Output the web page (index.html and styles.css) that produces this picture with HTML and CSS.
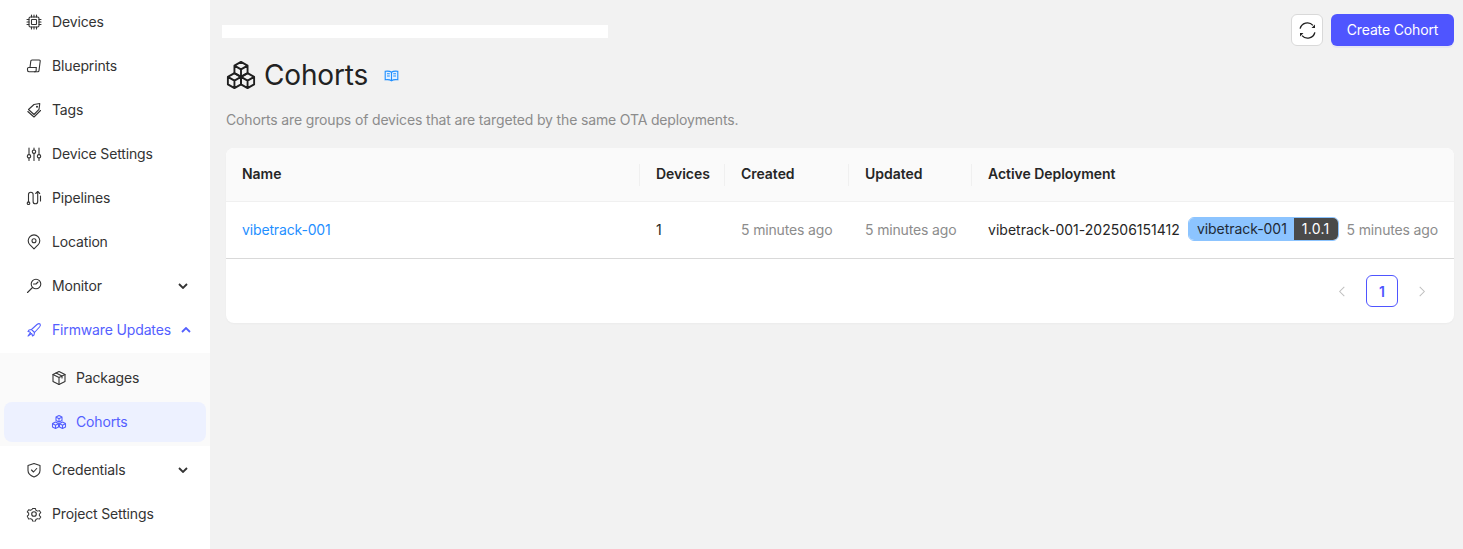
FILE: index.html
```html
<!DOCTYPE html>
<html lang="en">
<head>
<meta charset="utf-8">
<title>Cohorts</title>
<link rel="stylesheet" href="styles.css">
</head>
<body>
<div class="app">
  <nav class="sidebar">
    <a class="nav-item"><svg class="ico" viewBox="0 0 16 16"><rect x="3" y="3" width="10" height="10" rx="1.500"/><rect x="5.500" y="5.500" width="5" height="5" rx=".6"/><path d="M5.500 1v2M8 1v2M10.500 1v2M5.500 13v2M8 13v2M10.500 13v2M1 5.500h2M1 8h2M1 10.500h2M13 5.500h2M13 8h2M13 10.500h2"/></svg><span>Devices</span></a>
    <a class="nav-item"><svg class="ico" viewBox="0 0 16 16"><path d="M4 9.500 4.800 3A1.300 1.300 0 0 1 6 2h7.200a1 1 0 0 1 1 1.200L13 12.500a1.300 1.300 0 0 1-1.300 1.300H3A1.700 1.700 0 0 1 1.500 12v-1.300a1.200 1.200 0 0 1 1.200-1.200h7.500"/><path d="M10.200 9.500v2.500a1.700 1.700 0 0 1-1.700 1.800"/></svg><span>Blueprints</span></a>
    <a class="nav-item"><svg class="ico" viewBox="0 0 16 16"><path d="M2.500 7.500 8 2.500l5.800-1 -.8 5.800L8 12.500z"/><path d="M1.800 9.500 8 15l6.500-6.500"/><circle cx="11" cy="4.800" r=".5"/></svg><span>Tags</span></a>
    <a class="nav-item"><svg class="ico" viewBox="0 0 16 16"><path d="M3 2v6.500M3 12v2.500M8 2v2M8 7.500v7M13 2v6.500M13 12v2.500"/><circle cx="3" cy="10.300" r="1.700"/><circle cx="8" cy="5.700" r="1.700"/><circle cx="13" cy="10.300" r="1.700"/></svg><span>Device Settings</span></a>
    <a class="nav-item"><svg class="ico" viewBox="0 0 16 16"><circle cx="2.500" cy="13.200" r="1.300"/><path d="M2.500 12V4.500a2.300 2.300 0 0 1 4.600 0v7a2.300 2.300 0 0 0 4.600 0v-10"/><path d="M9.700 3.500l2-2 2 2"/><path d="M14.500 6v5"/></svg><span>Pipelines</span></a>
    <a class="nav-item"><svg class="ico" viewBox="0 0 16 16"><path d="M8 14.800 3.800 10.700a5.800 5.800 0 1 1 8.400 0z"/><circle cx="8" cy="6.800" r="2"/></svg><span>Location</span></a>
    <a class="nav-item"><svg class="ico" viewBox="0 0 16 16"><circle cx="10" cy="6" r="4.800"/><path d="M6.500 9.500 1.500 14.500M7.500 6h2.500l2-2"/></svg><span>Monitor</span><svg class="chev" viewBox="0 0 10 6"><path d="M1 1l4 4 4-4"/></svg></a>
    <a class="nav-item is-open"><svg class="ico" viewBox="0 0 16 16"><path d="M5.500 7.500 11 2.500c1-.8 2.500-1 3-.5s.3 2-.5 3L8.500 10.500z"/><path d="M5.500 7.500 3 8l-1 1.500 2 .5M8.500 10.500 8 13l-1.500 1-.5-2M4.500 10.500 2 14l3.500-2.500"/></svg><span>Firmware Updates</span><svg class="chev" viewBox="0 0 10 6"><path d="M1 5l4-4 4 4"/></svg></a>
    <div class="submenu">
      <a class="sub-item"><svg class="ico" viewBox="0 0 16 16"><path d="M8 1.500 14 4.500v7l-6 3-6-3v-7z"/><path d="M2 4.500 8 7.500l6-3M8 7.500v7M5 3l6 3v2"/></svg><span>Packages</span></a>
      <a class="sub-item is-active"><svg class="ico" viewBox="0 0 16 16"><path d="M8 1.500l3 1.600v3.300L8 8 5 6.400V3.100zM5 3.100 8 4.800l3-1.700M8 4.800V8"/><path d="M4.500 8 7.500 9.600v3.300l-3 1.600-3-1.600V9.600zM1.500 9.600l3 1.700 3-1.700M4.500 11.300v3.200"/><path d="M11.500 8l3 1.600v3.300l-3 1.600-3-1.600V9.600zM8.500 9.600l3 1.700 3-1.700M11.500 11.300v3.200"/></svg><span>Cohorts</span></a>
    </div>
    <a class="nav-item"><svg class="ico" viewBox="0 0 16 16"><path d="M8 1.500 14 3.500v5c0 3-2.500 5.200-6 6.500-3.500-1.300-6-3.500-6-6.500v-5z"/><path d="M5.500 8l2 2 3.200-3.500"/></svg><span>Credentials</span><svg class="chev" viewBox="0 0 10 6"><path d="M1 1l4 4 4-4"/></svg></a>
    <a class="nav-item"><svg class="ico" viewBox="0 0 16 16"><path d="M6.500 1.500h3l.5 2 1.700 1 2-.6 1.500 2.600-1.500 1.500v2l1.500 1.500-1.500 2.600-2-.6-1.700 1-.5 2h-3l-.5-2-1.700-1-2 .6L.8 10.500 2.300 9V7L.8 5.500l1.500-2.600 2 .6 1.700-1z" transform="matrix(.94 0 0 .84 .5 1.300)"/><circle cx="8" cy="8" r="2.300"/></svg><span>Project Settings</span></a>
  </nav>

  <main class="main">
    <header class="topbar">
      <div class="breadcrumb"></div>
      <div class="actions">
        <button class="btn-icon" type="button"><svg viewBox="0 0 16 16"><path d="M1.800 6.500A6.300 6.300 0 0 1 12.600 3.700"/><path d="M14.200 9.500A6.300 6.300 0 0 1 3.400 12.300"/><path class="arrowhead" d="M14.300 3v2.900h-2.900zM1.700 13v-2.900h2.900z"/></svg></button>
        <button class="btn-primary" type="button">Create Cohort</button>
      </div>
    </header>

    <div class="title-row">
      <svg class="title-ico" viewBox="0 0 32 32"><path d="M16 2l7 4v8l-7 4-7-4V6zM9 6l7 4 7-4M16 10v8"/><path d="M9 14l7 4v8l-7 4-7-4v-8zM2 18l7 4 7-4M9 22v8"/><path d="M23 14l7 4v8l-7 4-7-4v-8zM16 18l7 4 7-4M23 22v8"/></svg>
      <h1>Cohorts</h1>
      <svg class="doc-ico" viewBox="0 0 14 12"><path d="M7 2.200C5.500 1 3 1 .7 1.300v8.500C3 9.500 5.500 9.600 7 10.800c1.500-1.200 4-1.300 6.300-1V1.300C11 1 8.500 1 7 2.200zM7 2.200v8.600M2.500 3.800h2.800M2.500 6h2.800M8.700 3.800h2.800M8.700 6h2.800"/></svg>
    </div>
    <p class="desc">Cohorts are groups of devices that are targeted by the same OTA deployments.</p>

    <section class="card">
      <table class="table">
        <colgroup><col class="c-name"><col class="c-dev"><col class="c-created"><col class="c-updated"><col></colgroup>
        <thead>
          <tr><th>Name</th><th>Devices</th><th>Created</th><th>Updated</th><th>Active Deployment</th></tr>
        </thead>
        <tbody>
          <tr>
            <td><a class="link">vibetrack-001</a></td>
            <td>1</td>
            <td class="muted">5 minutes ago</td>
            <td class="muted">5 minutes ago</td>
            <td>
              <div class="deploy">
                <span class="digits">vibetrack-001-202506151412</span>
                <span class="tag"><span class="tag-name">vibetrack-001</span><span class="tag-ver">1.0.1</span></span>
                <span class="muted">5 minutes ago</span>
              </div>
            </td>
          </tr>
        </tbody>
      </table>
      <div class="pager">
        <svg class="pg-arrow" viewBox="0 0 8 12"><path d="M6.500 1 1.500 6l5 5"/></svg>
        <span class="pg-num">1</span>
        <svg class="pg-arrow" viewBox="0 0 8 12"><path d="M1.500 1l5 5-5 5"/></svg>
      </div>
    </section>
  </main>
</div>
</body>
</html>
```

FILE: styles.css
```css
* { box-sizing: border-box; }
html, body { margin: 0; height: 100%; }
body {
  font-family: Inter, "Liberation Sans", sans-serif;
  font-size: 14px;
  letter-spacing: -0.15px;
  color: #262626;
  background: #f2f2f2;
  overflow: hidden;
}
.app { display: flex; height: 549px; }

.sidebar {
  width: 210px;
  flex: none;
  background: #fff;
  color: #333;
}
.nav-item {
  display: flex;
  align-items: center;
  height: 44px;
  padding: 0 22px 0 26px;
  gap: 10px;
  white-space: nowrap;
}
.nav-item span { flex: 1; padding-bottom: 2px; }
.ico {
  width: 16px;
  height: 16px;
  flex: none;
  fill: none;
  stroke: currentColor;
  stroke-width: 1.100;
  stroke-linejoin: round;
  stroke-linecap: round;
}
.chev {
  width: 10px;
  height: 6px;
  flex: none;
  fill: none;
  stroke: currentColor;
  stroke-width: 1.800;
}
.is-open { color: #5460ff; }
.submenu {
  background: #fafafa;
  margin: 1px 0 2px;
  padding: 5px 4px 4px;
}
.sub-item {
  display: flex;
  align-items: center;
  height: 40px;
  padding-left: 47px;
  gap: 9px;
  border-radius: 8px;
  margin-bottom: 4px;
}
.sub-item span { padding-bottom: 2px; }
.sub-item:last-child { margin-bottom: 0; }
.is-active { background: #edf1ff; color: #5460ff; }

.main { flex: 1; min-width: 0; padding: 14px 9px 0 16px; }
.topbar { display: flex; align-items: flex-start; justify-content: space-between; height: 32px; }
.breadcrumb { width: 386px; height: 13px; background: #fff; margin: 11px 0 0 -4px; }
.actions { display: flex; gap: 8px; }
.btn-icon {
  width: 32px;
  height: 32px;
  padding: 0;
  display: flex;
  align-items: center;
  justify-content: center;
  background: #fff;
  border: 1px solid #d9d9d9;
  border-radius: 6px;
}
.btn-icon svg {
  width: 19px;
  height: 19px;
  flex: none;
  fill: none;
  stroke: #1f1f1f;
  stroke-width: 1.150;
}
.arrowhead { fill: #1f1f1f; stroke: none; }
.btn-primary {
  width: 123px;
  height: 32px;
  padding: 0 0 2px;
  background: #4f55ff;
  color: #fff;
  border: 0;
  border-radius: 6px;
  font: inherit;
  letter-spacing: inherit;
  box-shadow: 0 2px 0 rgba(79, 85, 255, .08);
}
.title-row { display: flex; align-items: center; height: 42px; margin-top: 8px; }
.title-ico {
  width: 30px;
  height: 30px;
  flex: none;
  fill: none;
  stroke: #1f1f1f;
  stroke-width: 2;
  stroke-linejoin: round;
  margin-right: 8px;
}
h1 { margin: 0; font-size: 28px; font-weight: 400; line-height: 36px; letter-spacing: -0.15px; color: #222; }
.doc-ico {
  width: 15px;
  height: 12px;
  margin: 2px 0 0 16px;
  fill: #e3f0ff;
  stroke: #1f8fff;
  stroke-width: 1.100;
}
.desc { margin: 13px 0 0; height: 22px; line-height: 22px; color: #8c8c8c; }

.card {
  margin-top: 17px;
  background: #fff;
  border-radius: 8px;
  overflow: hidden;
  box-shadow: 0 1px 2px rgba(0, 0, 0, .03);
}
.table { width: 100%; border-collapse: separate; border-spacing: 0; table-layout: fixed; }
.c-name { width: 414px; }
.c-dev { width: 85px; }
.c-created { width: 124px; }
.c-updated { width: 123px; }
th {
  height: 54px;
  padding: 0 16px 2px;
  text-align: left;
  font-weight: 600;
  letter-spacing: -0.04px;
  background: #fafafa;
  border-bottom: 1px solid #f0f0f0;
  position: relative;
}
th + th::before {
  content: "";
  position: absolute;
  left: -1px;
  top: 16px;
  height: 22px;
  width: 1px;
  background: #f0f0f0;
}
td {
  height: 57px;
  padding: 0 16px 2px;
  border-bottom: 1px solid #d9d9d9;
  white-space: nowrap;
}
.digits { letter-spacing: 0.02px; }
.link { color: #1f8fff; }
.muted { color: #8c8c8c; }
.deploy { display: flex; align-items: center; gap: 8px; }
.tag {
  display: flex;
  height: 24px;
  border: 1px solid #8cc4ff;
  border-radius: 6px;
  overflow: hidden;
  line-height: 21px;
  letter-spacing: -0.05px;
}
.tag-name { background: #8cc4ff; padding: 0 7px 0 8px; color: #1f2a36; }
.tag-ver { width: 44px; text-align: center; background: #4a4a4a; color: #fff; letter-spacing: 0.25px; }
.pager {
  height: 64px;
  display: flex;
  align-items: center;
  justify-content: flex-end;
  padding-right: 16px;
}
.pg-arrow {
  width: 32px;
  height: 11px;
  fill: none;
  stroke: #bfbfbf;
  stroke-width: 1.100;
}
.pg-num {
  width: 32px;
  height: 32px;
  margin: 0 8px;
  display: flex;
  align-items: center;
  justify-content: center;
  border: 1px solid #4f55ff;
  border-radius: 6px;
  color: #4f55ff;
  font-weight: 600;
}
```
